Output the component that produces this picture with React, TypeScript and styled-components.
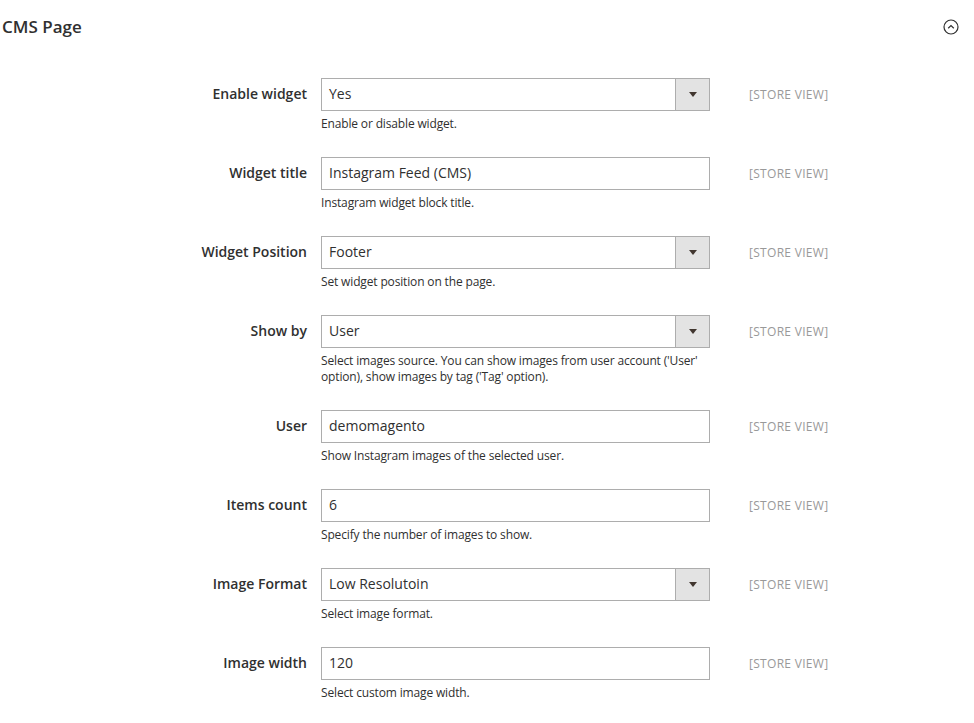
import React from "react";
import styled, { createGlobalStyle } from "styled-components";

const Global = createGlobalStyle`
  html, body { margin: 0; padding: 0; background: #fff; }
  body { font-family: "Open Sans", "Noto Sans", sans-serif; color: #303030; }
`;

const Section = styled.section`
  width: 974px;
  box-sizing: border-box;
`;

const Header = styled.div`
  display: flex;
  align-items: center;
  justify-content: space-between;
  padding: 17px 15px 17px 2px;
`;

const Title = styled.h2`
  margin: 0;
  font-size: 17px;
  line-height: 20px;
  font-weight: 600;
  color: #303030;
`;

const Toggle = styled.span`
  display: inline-flex;
  width: 16px;
  height: 16px;
`;

const Fields = styled.div`
  display: flex;
  flex-direction: column;
  gap: 25px;
  padding-top: 24px;
`;

const Row = styled.div`
  display: grid;
  grid-template-columns: 321px 389px auto;
  align-items: start;
`;

const Label = styled.label`
  box-sizing: border-box;
  padding-right: 14px;
  text-align: right;
  font-size: 14px;
  font-weight: 600;
  line-height: 32px;
  color: #303030;
`;

const Control = styled.div`
  width: 389px;
`;

const Box = styled.div`
  box-sizing: border-box;
  height: 33px;
  width: 389px;
  border: 1px solid #adadad;
  background: #fff;
  display: flex;
  align-items: stretch;
  font-size: 14px;
  color: #303030;
`;

const Value = styled.span`
  flex: 1;
  padding: 0 7px;
  line-height: 30px;
  white-space: nowrap;
`;

const ArrowBtn = styled.span`
  width: 33px;
  border-left: 1px solid #adadad;
  background: #e3e3e3;
  display: flex;
  align-items: center;
  justify-content: center;
`;

const Arrow = styled.span`
  width: 0;
  height: 0;
  border-left: 4px solid transparent;
  border-right: 4px solid transparent;
  border-top: 5px solid #41362f;
`;

const Note = styled.div`
  margin-top: 5px;
  font-size: 12px;
  line-height: 16px;
  letter-spacing: -0.15px;
  color: #303030;
`;

const Scope = styled.div`
  margin-left: 39px;
  font-size: 12px;
  line-height: 33px;
  letter-spacing: 0.3px;
  color: #999;
  text-transform: uppercase;
`;

type Field = { label: string; value: string; select?: boolean; note: string };

const fields: Field[] = [
  { label: "Enable widget", value: "Yes", select: true, note: "Enable or disable widget." },
  { label: "Widget title", value: "Instagram Feed (CMS)", note: "Instagram widget block title." },
  { label: "Widget Position", value: "Footer", select: true, note: "Set widget position on the page." },
  {
    label: "Show by",
    value: "User",
    select: true,
    note: "Select images source. You can show images from user account ('User' option), show images by tag ('Tag' option).",
  },
  { label: "User", value: "demomagento", note: "Show Instagram images of the selected user." },
  { label: "Items count", value: "6", note: "Specify the number of images to show." },
  { label: "Image Format", value: "Low Resolutoin", select: true, note: "Select image format." },
  { label: "Image width", value: "120", note: "Select custom image width." },
];

export default function App() {
  return (
    <Section>
      <Global />
      <Header>
        <Title>CMS Page</Title>
        <Toggle>
          <svg width="16" height="16" viewBox="0 0 16 16" fill="none">
            <circle cx="8" cy="8" r="7" stroke="#303030" strokeWidth="1.2" />
            <path d="M5.2 9.3 L8 6.6 L10.8 9.3" stroke="#303030" strokeWidth="1.2" fill="none" />
          </svg>
        </Toggle>
      </Header>
      <Fields>
        {fields.map((f) => (
          <Row key={f.label}>
            <Label>{f.label}</Label>
            <Control>
              <Box>
                <Value>{f.value}</Value>
                {f.select && (
                  <ArrowBtn>
                    <Arrow />
                  </ArrowBtn>
                )}
              </Box>
              <Note>{f.note}</Note>
            </Control>
            <Scope>[Store View]</Scope>
          </Row>
        ))}
      </Fields>
    </Section>
  );
}
